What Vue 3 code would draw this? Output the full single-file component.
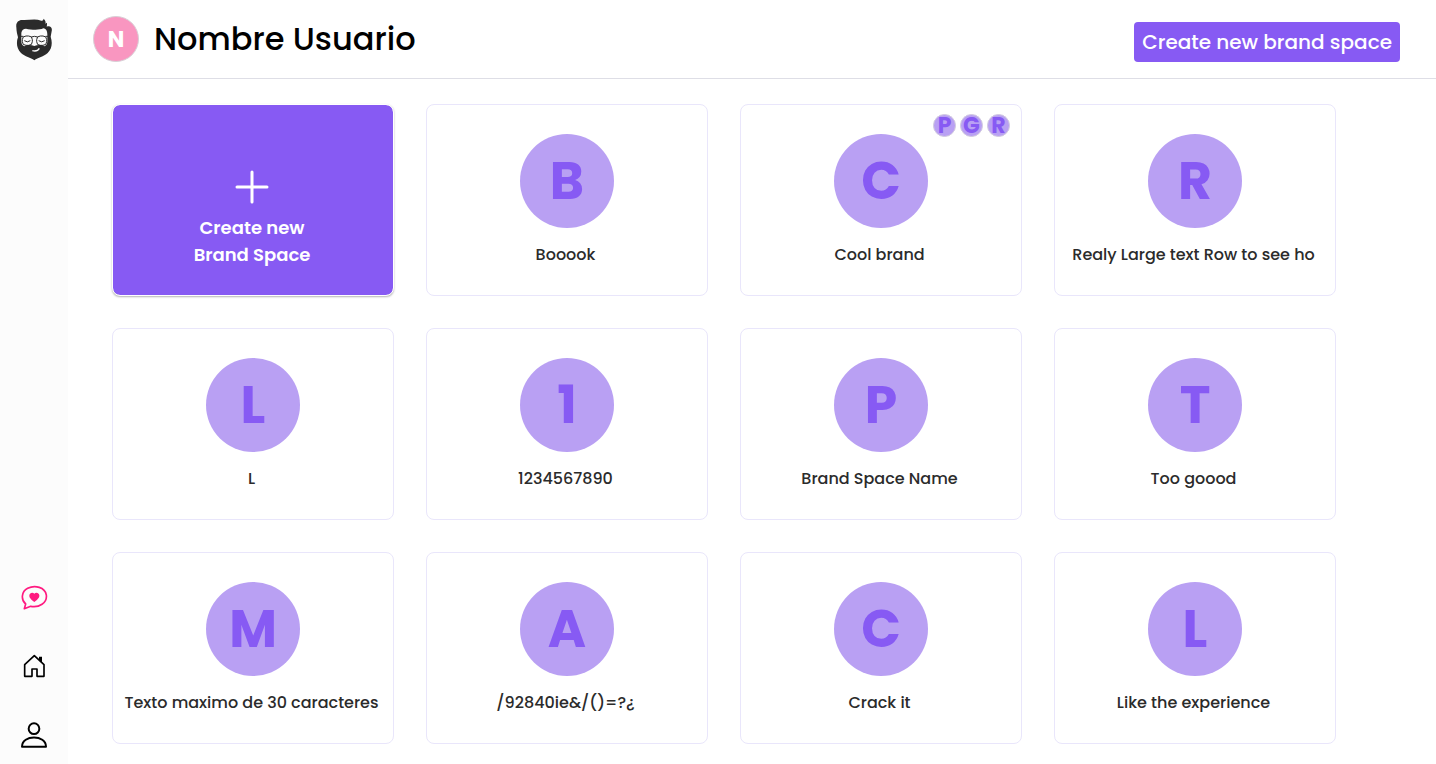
<template>
  <div class="layout">
    <aside class="sidebar">
      <a href="#" class="logo" aria-label="Home page">
        <svg width="36" height="43" viewBox="48 54 108 129">
          <path
            fill="#2b2b2b"
            d="M49 82 C47 68 55 60 66 60 C84 62 104 55 124 62 C129 63 131 60 130 56 C136 60 138 66 136 71 L141 68 C141 74 141 77 140 80 C150 76 158 82 155 94 L152 110 C158 128 156 146 143 159 C131 170 114 172 103 181 C92 172 75 170 63 159 C50 146 48 128 54 112 L51 100 C50 94 49 88 49 82Z"
          />
          <path
            fill="#fcfcfc"
            d="M64 98 C66 90 70 86 78 86 C92 89 116 92 130 85 C139 86 142 94 142 104 V124 C142 132 139 137 133 139 C124 133 112 134 103 138 C94 134 82 133 73 139 C67 137 64 132 64 124Z"
          />
          <g fill="none" stroke="#2b2b2b" stroke-width="3">
            <rect x="67" y="108" width="30" height="28" rx="11" />
            <rect x="110" y="108" width="30" height="28" rx="11" />
            <path d="M62 109 H70 M137 109 H144 M94 111 Q103 107 113 111" />
            <path d="M73 122 Q82 129 91 122 M116 122 Q125 129 134 122" />
          </g>
          <path
            d="M97 152 Q112 156 118 145"
            fill="none"
            stroke="#fcfcfc"
            stroke-width="4"
          />
        </svg>
      </a>

      <nav class="menu">
        <a href="#feedback" aria-label="Feedback">
          <svg width="27" height="25" viewBox="62 45 81 75">
            <path
              d="M76 102 C61 89 63 65 82 55 C104 44 134 52 138 75 C141 99 116 114 91 109 L72 116 Z"
              fill="none"
              stroke="#ff1a80"
              stroke-width="5"
              stroke-linejoin="round"
            />
            <path
              d="M102 96 C94 90 86 84 87 76 C88 67 98 66 102 71 C106 66 116 67 117 76 C118 84 110 90 102 96Z"
              fill="#ff1a80"
            />
          </svg>
        </a>
        <a href="#home" aria-label="Home">
          <svg width="23" height="24" viewBox="68 252 69 72">
            <path
              d="M73 284 L102 257 L131 284 V319 H110 V297 H95 V319 H73Z"
              fill="none"
              stroke="#000"
              stroke-width="5"
              stroke-linejoin="round"
            />
            <path d="M116 260 H125 V280 L116 271Z" fill="#000" />
          </svg>
        </a>
        <a href="#profile" aria-label="Profile">
          <svg width="26" height="26" viewBox="63 455 78 78">
            <g fill="none" stroke="#000" stroke-width="6" stroke-linejoin="round">
              <circle cx="102" cy="475" r="16" />
              <path d="M66 529 C66 492 138 492 138 529Z" />
            </g>
          </svg>
        </a>
      </nav>
    </aside>

    <main class="content">
      <header class="header">
        <div class="user">
          <span class="user-avatar">N</span>
          <h1 class="user-name">Nombre Usuario</h1>
        </div>
        <button type="button" class="create-btn">Create new brand space</button>
      </header>

      <section class="grid">
        <button type="button" class="card card-new">
          <svg width="34" height="34" viewBox="0 0 34 34">
            <path
              d="M17 2 V32 M2 17 H32"
              stroke="#fff"
              stroke-width="3"
              stroke-linecap="round"
            />
          </svg>
          <span>Create new<br />Brand Space</span>
        </button>

        <a
          v-for="brand in brands"
          :key="brand.name"
          href="#brand"
          class="card"
        >
          <span v-if="brand.members" class="members">
            <span v-for="m in brand.members" :key="m" class="member">{{ m }}</span>
          </span>
          <span class="circle">{{ initial(brand.name, brand.letter) }}</span>
          <span class="name">{{ brand.name }}</span>
        </a>
      </section>
    </main>
  </div>
</template>

<script setup>
import { ref } from "vue";

const brands = ref([
  { name: "Booook" },
  { name: "Cool brand", members: ["P", "G", "R"] },
  { name: "Realy Large text Row to see ho" },
  { name: "L" },
  { name: "1234567890" },
  { name: "Brand Space Name", letter: "P" },
  { name: "Too goood" },
  { name: "Texto maximo de 30 caracteres", letter: "M" },
  { name: "/92840ie&/()=?¿", letter: "A" },
  { name: "Crack it" },
  { name: "Like the experience" },
]);

// custom letter wins over the first character of the name
const initial = (name, letter) => letter || name.charAt(0).toUpperCase();
</script>

<style>
body {
  background: #fff;
}
</style>

<style scoped>
.layout {
  display: flex;
  min-height: 100vh;
  font-family: Poppins, Inter, "Liberation Sans", sans-serif;
  font-weight: 500;
  color: #2b2b2b;
}

.layout * {
  box-sizing: border-box;
}

.layout svg {
  display: block;
}

.sidebar {
  flex: 0 0 68px;
  display: flex;
  flex-direction: column;
  align-items: center;
  justify-content: space-between;
  padding: 18px 0 16px;
  box-sizing: border-box;
  background: #fcfcfc;
}

.menu {
  display: flex;
  flex-direction: column;
  align-items: center;
  gap: 44px;
}

.content {
  flex: 1;
  min-width: 0;
}

.header {
  display: flex;
  align-items: flex-end;
  justify-content: space-between;
  padding: 16px 36px 16px 25px;
  border-bottom: 1px solid #dedee6;
}

.user {
  display: flex;
  align-items: center;
  gap: 15px;
}

.user-avatar {
  display: flex;
  align-items: center;
  justify-content: center;
  width: 46px;
  height: 46px;
  border: 1px solid #d8d0d6;
  border-radius: 50%;
  background: #f996c0;
  color: #fff;
  font-size: 22px;
  font-weight: 700;
}

.user-name {
  margin: 0;
  font-size: 32px;
  font-weight: 500;
  line-height: 46px;
  color: #000;
}

.create-btn {
  height: 40px;
  padding: 0 8px;
  border: 0;
  border-radius: 4px;
  background: #875af3;
  color: #fff;
  font: inherit;
  font-size: 20px;
  white-space: nowrap;
  cursor: pointer;
}

.grid {
  display: grid;
  grid-template-columns: repeat(auto-fill, minmax(260px, 1fr));
  gap: 32px;
  padding: 25px 100px 20px 44px;
}

.card {
  position: relative;
  display: flex;
  flex-direction: column;
  align-items: center;
  gap: 15px;
  padding: 29px 8px 28px;
  border: 1px solid #e9e6fb;
  border-radius: 8px;
  background: #fff;
  color: inherit;
  text-decoration: none;
}

.card-new {
  justify-content: flex-end;
  gap: 10px;
  padding: 27px 10px 27px 8px;
  border-color: #fff;
  background: #875af3;
  background-clip: padding-box;
  box-shadow: 0 1px 2px rgba(0, 0, 0, 0.3);
  color: #fff;
  font: inherit;
  font-size: 18px;
  font-weight: 600;
  line-height: 27px;
  cursor: pointer;
}

.circle {
  display: flex;
  align-items: center;
  justify-content: center;
  width: 94px;
  height: 94px;
  border-radius: 50%;
  background: #b9a0f3;
  color: #875af3;
  font-size: 52px;
  font-weight: 700;
}

.name {
  padding-right: 3px;
  font-size: 16px;
  line-height: 24px;
  white-space: nowrap;
}

.members {
  position: absolute;
  top: 9px;
  right: 11px;
  display: flex;
  gap: 4px;
}

.member {
  display: flex;
  align-items: center;
  justify-content: center;
  width: 23px;
  height: 23px;
  border: 1px solid #d2cbdf;
  border-radius: 50%;
  background: #b9a0f3;
  color: #875af3;
  font-size: 22px;
  font-weight: 700;
}
</style>
